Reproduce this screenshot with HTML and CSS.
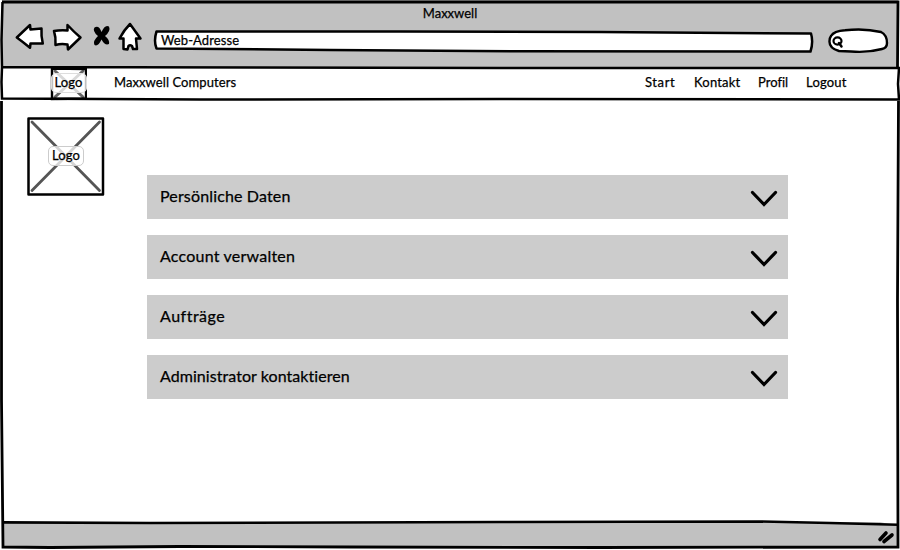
FILE: index.html
```html
<!DOCTYPE html>
<html lang="de">
<head>
<meta charset="utf-8">
<title>Maxxwell</title>
<link rel="stylesheet" href="styles.css">
</head>
<body>
<div class="window">
  <header class="chrome">
    <div class="title"><span class="t-title">Maxxwell</span></div>
    <div class="toolbar">
      <svg class="nav-icons" width="132" height="34" viewBox="12 20 132 34">
        <g fill="#fff" stroke="#000" stroke-width="2.500" stroke-linejoin="round" stroke-linecap="round">
          <path d="M16.800 37.500L30 25L30.500 29.500L41.500 28.500Q41 36 42.800 43.500L30.500 43.500L30 47.800Q23 42 16.800 37.500Z"/>
          <path d="M54 31Q60 30 67.500 30.500L67.500 25Q74 32 80.500 37.500L68 49.500L67.500 44.500Q61 43.500 55.500 45Q56 37 54 31Z"/>
          <path d="M130 24L140.500 38.500L136 38.500L137 49L133 49L132 46Q130 44.500 128.500 46L127.500 49.500L123.500 49L123.500 38.500L119.500 38.500Q124 30 130 24Z"/>
        </g>
        <path d="M94.500 27.500Q99 25 101.500 32Q105 24 109 26.500Q111 31 105 36Q110 40 109 44Q105 46 101.500 39.500Q98 47 94.500 45Q92.500 41 98 36Q92 31 94.500 27.500Z"/>
      </svg>
      <div class="address">
        <svg class="field" width="662" height="26" viewBox="152 28 662 26"><path d="M156.500 31.500L400 31.500L600 32L811 33.500Q813.500 42 810.500 51.500L520 51.300L330 50L156.500 48.500Q153.500 41 156.500 31.500Z" fill="#fff" stroke="#000" stroke-width="2.500" stroke-linejoin="round"/></svg>
        <span class="t-address">Web-Adresse</span>
      </div>
      <svg class="search" width="62" height="28" viewBox="827 27 62 28">
        <path d="M830 36Q833 31 844 30.300Q863 28 880 32Q886 35 886 43Q886 48 881 49Q866 53 850 51.500L838 51Q828 48 828.500 41Q828.500 38 830 36Z" fill="#fff" stroke="#000" stroke-width="2.400"/>
        <ellipse cx="836.500" cy="41" rx="4" ry="3.600" fill="none" stroke="#000" stroke-width="2.200"/>
        <path d="M838 43L840.500 46.500" stroke="#000" stroke-width="2.500" stroke-linecap="round"/>
      </svg>
    </div>
  </header>
  <nav class="site-nav">
    <div class="logo logo-small">
      <svg width="37" height="34" viewBox="0 0 37 34"><path d="M5 4L33 30M33 4L5 30" stroke="#666" stroke-width="3" stroke-linecap="round"/><path d="M2 1.500L36 2V31.500L2 32Z" fill="none" stroke="#000" stroke-width="2.400"/></svg>
      <span class="logo-label"><b class="t-logo">Logo</b></span>
    </div>
    <span class="brand"><b class="t-brand">Maxxwell Computers</b></span>
    <ul class="links">
      <li class="l-start">Start</li><li class="l-kontakt">Kontakt</li><li class="l-profil">Profil</li><li class="l-logout">Logout</li>
    </ul>
  </nav>
  <main class="content">
    <div class="logo logo-large">
      <svg width="78" height="80" viewBox="0 0 78 80"><path d="M5 5L72.500 73.500M72.500 5L5 73.500" stroke="#555" stroke-width="2.800" stroke-linecap="round"/><path d="M1.500 1.500L76 1.500V77.500L1.500 77.500Z" fill="none" stroke="#000" stroke-width="2.500" stroke-linejoin="round"/></svg>
      <span class="logo-label"><b class="t-logo">Logo</b></span>
    </div>
    <div class="accordion">
      <div class="row"><span class="r-daten">Persönliche Daten</span><svg class="chevron" width="30" height="20" viewBox="0 0 30 20"><path d="M3.500 3.500L15 15.500L26.500 3.500"/></svg></div>
      <div class="row"><span class="r-account">Account verwalten</span><svg class="chevron" width="30" height="20" viewBox="0 0 30 20"><path d="M3.500 3.500L15 15.500L26.500 3.500"/></svg></div>
      <div class="row"><span class="r-auftraege">Aufträge</span><svg class="chevron" width="30" height="20" viewBox="0 0 30 20"><path d="M3.500 3.500L15 15.500L26.500 3.500"/></svg></div>
      <div class="row"><span class="r-admin">Administrator kontaktieren</span><svg class="chevron" width="30" height="20" viewBox="0 0 30 20"><path d="M3.500 3.500L15 15.500L26.500 3.500"/></svg></div>
    </div>
  </main>
  <footer class="status">
    <svg width="900" height="30" viewBox="0 520 900 30">
      <path d="M2 522L880 522L898 526V548H2Z" fill="#c1c1c1"/>
      <path d="M2 522.400L150 523L500 522L760 521.500L830 523L898 524.800" fill="none" stroke="#000" stroke-width="2.600"/>
      <path d="M880 539.500L886 533M884 541.500L892 535" stroke="#000" stroke-width="3.600" stroke-linecap="round"/>
    </svg>
  </footer>
  <svg class="frame" width="900" height="550" viewBox="0 0 900 550" fill="none" stroke="#000">
    <path d="M2 2L300 2L898 2L897.500 67M898.500 101L897.500 300L898 547L600 547.500L350 547L180 546.500L50 547.500L3 547L1.500 400L1.500 101" stroke-width="2.800"/>
    <path d="M2.500 2L1.500 40L2 67L500 68L899 68L898 84L899 99.500L500 99L200 99.500L2 98.500L1.500 82L2 67" stroke-width="2.500"/>
  </svg>
</div>
</body>
</html>
```

FILE: styles.css
```css
* { box-sizing: border-box; }
body { margin: 0; background: #fff; font-family: Lato, "Noto Sans", sans-serif; font-size: 13px; color: #000; font-variant-ligatures: none; }
b { font-weight: inherit; }
.window { position: relative; width: 900px; height: 550px; overflow: hidden; display: flex; flex-direction: column; -webkit-text-stroke: 0.25px #000; }
.frame { position: absolute; inset: 0; pointer-events: none; }

.chrome { height: 67px; margin: 0 2px; padding-top: 3px; background: #c1c1c1; }
.title { height: 20px; line-height: 20px; text-align: center; }
.toolbar { display: flex; align-items: flex-start; padding: 0 10px; }
.toolbar > * { flex: none; }
.nav-icons { margin-top: -3px; }
.address { position: relative; width: 662px; height: 26px; margin: 5px 14px 0 8px; padding-left: 9px; line-height: 25px; }
.field { position: absolute; left: 0; top: 0; }
.address span { position: relative; }
.t-address { letter-spacing: .1px; }
.search { margin-top: 4px; }

.site-nav { height: 34px; display: flex; align-items: center; padding-left: 50px; background: #fff; }
.logo { position: relative; display: flex; align-items: center; justify-content: center; }
.logo svg { display: block; }
.logo-label { position: absolute; width: 36px; height: 20px; line-height: 17px; text-align: center; border: 1px solid #ccc; border-radius: 5px; background: rgba(255, 255, 255, .75); }
.logo-small { width: 37px; height: 34px; }
.logo-small .logo-label { border-color: #ddd; line-height: 16px; top: 6px; }
.t-logo { letter-spacing: .15px; }
.brand { margin-left: 27px; width: 531px; line-height: 30px; margin-top: -5px; letter-spacing: .08px; }
.links { display: flex; list-style: none; margin: -5px 0 0; padding: 0; line-height: 30px; letter-spacing: .2px; }
.links li { white-space: nowrap; }
.l-start { width: 49px; letter-spacing: .6px; }
.l-kontakt { width: 64px; }
.l-profil { width: 48px; letter-spacing: 0; }

.content { height: 419px; display: flex; align-items: flex-start; padding: 16px 0 0 27px; }
.logo-large { width: 78px; height: 80px; }
.logo-large .logo-label { top: 29px; left: 21px; line-height: 17px; }
.accordion { width: 641px; margin: 58px 0 0 42px; display: flex; flex-direction: column; gap: 16px; }
.row { height: 44px; display: flex; align-items: center; justify-content: space-between; padding: 0 9px 3px 13px; background: #ccc; font-size: 16px; }
.r-daten { letter-spacing: .15px; }
.r-account { letter-spacing: .22px; }
.r-auftraege { letter-spacing: .5px; }
.r-admin { letter-spacing: .06px; }
.chevron { margin-top: 6px; fill: none; stroke: #000; stroke-width: 3.2; stroke-linecap: round; }
.status { height: 30px; }
.status svg { display: block; }
```
